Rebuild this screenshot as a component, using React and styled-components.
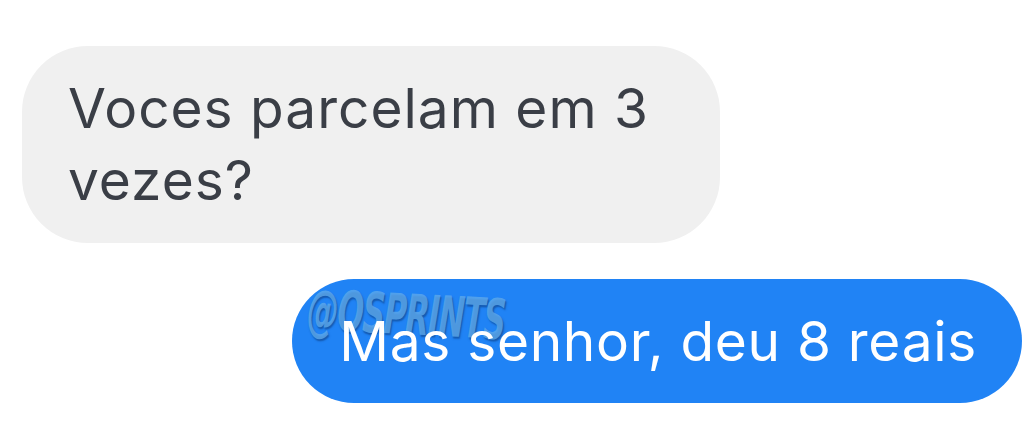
import React from "react";
import styled, { createGlobalStyle } from "styled-components";

const GlobalStyle = createGlobalStyle`
  html, body {
    margin: 0;
    padding: 0;
    background: #ffffff;
  }
  body {
    font-family: Inter, "Liberation Sans", sans-serif;
  }
`;

const Thread = styled.div`
  width: 1024px;
  height: 440px;
  box-sizing: border-box;
  padding: 46px 2px 0 22px;
  display: flex;
  flex-direction: column;
  gap: 36px;
  overflow: hidden;
`;

const Row = styled.div`
  display: flex;
  justify-content: ${(p) => (p.$mine ? "flex-end" : "flex-start")};
`;

const Bubble = styled.div`
  position: relative;
  box-sizing: border-box;
  max-width: ${(p) => (p.$mine ? "none" : "698px")};
  padding: ${(p) => (p.$mine ? "26px 45px 26px 47px" : "26px 46px 27px 46px")};
  border-radius: ${(p) => (p.$mine ? "62px" : "66px")};
  background: ${(p) => (p.$mine ? "#2083f5" : "#f0f0f0")};
  color: ${(p) => (p.$mine ? "#ffffff" : "#3a3e46")};
  font-size: 55px;
  line-height: 72px;
  font-weight: 400;
  letter-spacing: ${(p) => (p.$mine ? "0.7px" : "1px")};
  white-space: ${(p) => (p.$mine ? "nowrap" : "normal")};
`;

const Watermark = styled.span`
  position: absolute;
  left: 17px;
  top: 2px;
  font-family: "DejaVu Sans Condensed", "DejaVu Sans", sans-serif;
  font-weight: 700;
  font-style: italic;
  font-size: 56px;
  line-height: 58px;
  letter-spacing: -2px;
  color: rgba(95, 170, 235, 0.78);
  text-shadow: 2px 2px 2px rgba(10, 50, 110, 0.5);
  transform: rotate(3deg) scaleX(0.62);
  transform-origin: left top;
  pointer-events: none;
`;

const Text = styled.span`
  position: relative;
`;

export default function App() {
  return (
    <>
      <GlobalStyle />
      <Thread>
        <Row>
          <Bubble>Voces parcelam em 3 vezes?</Bubble>
        </Row>
        <Row $mine>
          <Bubble $mine>
            <Watermark>@OSPRINTS</Watermark>
            <Text>Mas senhor, deu 8 reais</Text>
          </Bubble>
        </Row>
      </Thread>
    </>
  );
}
